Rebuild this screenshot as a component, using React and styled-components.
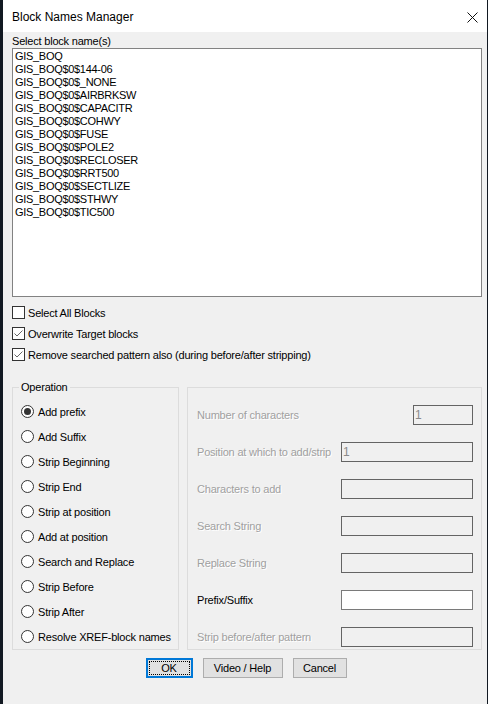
import React from 'react';
import styled, { createGlobalStyle } from 'styled-components';

const GlobalStyle = createGlobalStyle`
  body {
    margin: 0;
    background: #121922;
    font-family: "Liberation Sans", Arial, sans-serif;
  }
`;

const blocks = [
  'GIS_BOQ',
  'GIS_BOQ$0$144-06',
  'GIS_BOQ$0$_NONE',
  'GIS_BOQ$0$AIRBRKSW',
  'GIS_BOQ$0$CAPACITR',
  'GIS_BOQ$0$COHWY',
  'GIS_BOQ$0$FUSE',
  'GIS_BOQ$0$POLE2',
  'GIS_BOQ$0$RECLOSER',
  'GIS_BOQ$0$RRT500',
  'GIS_BOQ$0$SECTLIZE',
  'GIS_BOQ$0$STHWY',
  'GIS_BOQ$0$TIC500',
];

const operations = [
  'Add prefix',
  'Add Suffix',
  'Strip Beginning',
  'Strip End',
  'Strip at position',
  'Add at position',
  'Search and Replace',
  'Strip Before',
  'Strip After',
  'Resolve XREF-block names',
];

const fields = [
  { label: 'Number of characters', value: '1', short: true },
  { label: 'Position at which to add/strip', value: '1' },
  { label: 'Characters to add' },
  { label: 'Search String' },
  { label: 'Replace String' },
  { label: 'Prefix/Suffix', enabled: true },
  { label: 'Strip before/after pattern' },
];

const Window = styled.div`
  margin-left: 3px;
  width: 484px;
  height: 704px;
  background: #f0f0f0;
  display: flex;
  flex-direction: column;
  color: #000;
  font-size: 11px;
  letter-spacing: -0.2px;
`;

const TitleBar = styled.div`
  height: 32px;
  background: #fff;
  display: flex;
  align-items: center;
  justify-content: space-between;
  padding: 2px 9px 0 9px;
  box-sizing: border-box;
  font-size: 12px;
  letter-spacing: 0;
`;

const Body = styled.div`
  padding: 0 5px 0 9px;
  display: flex;
  flex-direction: column;
`;

const SectionLabel = styled.div`
  height: 16px;
  line-height: 16px;
  padding-top: 1px;
  box-sizing: border-box;
`;

const ListBox = styled.div`
  height: 249px;
  background: #fff;
  border: 1px solid #828282;
  box-sizing: border-box;
  padding: 1px 2px;
`;

const ListItem = styled.div`
  height: 13px;
  line-height: 13px;
  font-size: 11px;
  letter-spacing: -0.3px;
  white-space: nowrap;
`;

const Checks = styled.div`
  margin-top: 5px;
  display: flex;
  flex-direction: column;
`;

const CheckRow = styled.label`
  height: 21px;
  display: flex;
  align-items: center;
  gap: 3px;
`;

const Box = styled.span`
  width: 13px;
  height: 13px;
  box-sizing: border-box;
  border: 1px solid #333;
  background: #fff;
  display: flex;
  align-items: center;
  justify-content: center;
`;

const Groups = styled.div`
  margin-top: 22px;
  display: flex;
  gap: 8px;
  height: 263px;
`;

const Group = styled.div`
  position: relative;
  width: ${(p) => p.$width}px;
  border: 1px solid #dcdcdc;
  box-sizing: border-box;
  display: flex;
  flex-direction: column;
`;

const Legend = styled.span`
  position: absolute;
  top: -7px;
  left: 6px;
  padding: 0 2px;
  background: #f0f0f0;
  line-height: 13px;
`;

const RadioList = styled.div`
  padding: 11px 0 0 8px;
  display: flex;
  flex-direction: column;
`;

const RadioRow = styled.label`
  height: 25px;
  display: flex;
  align-items: center;
  gap: 4px;
`;

const Radio = styled.span`
  width: 13px;
  height: 13px;
  box-sizing: border-box;
  border: 1px solid #333;
  border-radius: 50%;
  background: #fff;
  display: flex;
  align-items: center;
  justify-content: center;
  &::after {
    content: '';
    width: 7px;
    height: 7px;
    border-radius: 50%;
    background: ${(p) => (p.$checked ? '#333' : 'transparent')};
  }
`;

const FieldList = styled.div`
  padding: 17px 8px 0 9px;
  display: flex;
  flex-direction: column;
  gap: 17px;
`;

const FieldRow = styled.div`
  height: 20px;
  display: flex;
  align-items: center;
  justify-content: space-between;
`;

const FieldLabel = styled.span`
  color: ${(p) => (p.$enabled ? '#000' : '#a0a0a0')};
  text-shadow: ${(p) => (p.$enabled ? 'none' : '1px 1px 0 #fff')};
`;

const Input = styled.div`
  width: ${(p) => (p.$short ? 60 : 132)}px;
  height: 20px;
  box-sizing: border-box;
  border: 1px solid ${(p) => (p.$enabled ? '#7a7a7a' : '#646464')};
  background: ${(p) => (p.$enabled ? '#fff' : '#f0f0f0')};
  color: #8a8a8a;
  padding-left: 1px;
  line-height: 18px;
  font-size: 12px;
`;

const Buttons = styled.div`
  margin-top: 8px;
  display: flex;
  justify-content: center;
  gap: 10px;
  padding-right: 2px;
`;

const Button = styled.div`
  width: ${(p) => p.$width}px;
  height: 20px;
  box-sizing: border-box;
  background: #e1e1e1;
  border: ${(p) => (p.$default ? '2px solid #0078d7' : '1px solid #adadad')};
  display: flex;
  align-items: center;
  justify-content: center;
  padding: ${(p) => (p.$default ? '1px' : '0')};
`;

const Focus = styled.span`
  flex: 1;
  align-self: stretch;
  display: flex;
  align-items: center;
  justify-content: center;
  border: 1px dotted #000;
`;

const Check = () => (
  <svg width="11" height="11" viewBox="0 0 11 11">
    <path d="M1.5 5.5 L4 8 L9.5 2.5" fill="none" stroke="#666" strokeWidth="1" />
  </svg>
);

const CloseIcon = () => (
  <svg width="11" height="11" viewBox="0 0 11 11">
    <path d="M0.5 0.5 L10.5 10.5 M10.5 0.5 L0.5 10.5" stroke="#111" strokeWidth="1" />
  </svg>
);

const App = () => (
  <>
    <GlobalStyle />
    <Window>
      <TitleBar>
        <span>Block Names Manager</span>
        <CloseIcon />
      </TitleBar>
      <Body>
        <SectionLabel>Select block name(s)</SectionLabel>
        <ListBox>
          {blocks.map((b) => (
            <ListItem key={b}>{b}</ListItem>
          ))}
        </ListBox>
        <Checks>
          <CheckRow>
            <Box />
            Select All Blocks
          </CheckRow>
          <CheckRow>
            <Box>
              <Check />
            </Box>
            Overwrite Target blocks
          </CheckRow>
          <CheckRow>
            <Box>
              <Check />
            </Box>
            Remove searched pattern also (during before/after stripping)
          </CheckRow>
        </Checks>
        <Groups>
          <Group $width={167}>
            <Legend>Operation</Legend>
            <RadioList>
              {operations.map((op, i) => (
                <RadioRow key={op}>
                  <Radio $checked={i === 0} />
                  {op}
                </RadioRow>
              ))}
            </RadioList>
          </Group>
          <Group $width={295}>
            <FieldList>
              {fields.map((f) => (
                <FieldRow key={f.label}>
                  <FieldLabel $enabled={f.enabled}>{f.label}</FieldLabel>
                  <Input $short={f.short} $enabled={f.enabled}>
                    {f.value}
                  </Input>
                </FieldRow>
              ))}
            </FieldList>
          </Group>
        </Groups>
        <Buttons>
          <Button $width={47} $default>
            <Focus>OK</Focus>
          </Button>
          <Button $width={80}>Video / Help</Button>
          <Button $width={54}>Cancel</Button>
        </Buttons>
      </Body>
    </Window>
  </>
);

export default App;
